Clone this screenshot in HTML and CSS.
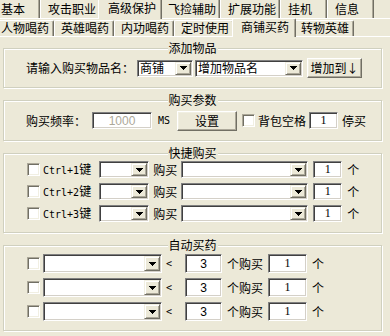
FILE: index.html
```html
<!DOCTYPE html>
<html lang="zh-CN">
<head>
  <meta charset="UTF-8" />
  <title>商铺买药</title>
  <link rel="stylesheet" href="styles.css">
</head>
<body>

<!-- 外层标签 -->
<div class="tabs tabs-outer">
  <span class="tab first">基本</span>
  <span class="tab">攻击职业</span>
  <span class="tab active">高级保护</span>
  <span class="tab">飞捡辅助</span>
  <span class="tab">扩展功能</span>
  <span class="tab">挂机</span>
  <span class="tab">信息</span>
</div>

<!-- 内层标签 -->
<div class="tabs tabs-inner">
  <span class="tab first">人物喝药</span>
  <span class="tab">英雄喝药</span>
  <span class="tab">内功喝药</span>
  <span class="tab">定时使用</span>
  <span class="tab active">商铺买药</span>
  <span class="tab">转物英雄</span>
</div>

<div class="panel">

  <!-- 添加物品 -->
  <div class="group group-add">
    <span class="group-title">添加物品</span>
    <span class="label">请输入购买物品名：</span>
    <div class="combo combo-shop"><span class="combo-text">商铺</span><span class="combo-btn"></span></div>
    <div class="combo combo-item"><span class="combo-text">增加物品名</span><span class="combo-btn"></span></div>
    <button class="btn btn-add">增加到↓</button>
  </div>

  <!-- 购买参数 -->
  <div class="group group-param">
    <span class="group-title">购买参数</span>
    <span class="label">购买频率：</span>
    <input class="field field-rate" value="1000" disabled>
    <span class="mono unit">MS</span>
    <button class="btn btn-set">设置</button>
    <input type="checkbox" class="check check-bag">
    <span class="label-bag">背包空格</span>
    <input class="field field-bag" value="1">
    <span class="label-stop">停买</span>
  </div>

  <!-- 快捷购买 -->
  <div class="group group-quick">
    <span class="group-title">快捷购买</span>
    <div class="row">
      <input type="checkbox" class="check">
      <span class="hotkey"><span class="mono">Ctrl+1</span>键</span>
      <div class="combo combo-key"><span class="combo-text"></span><span class="combo-btn"></span></div>
      <span class="buy">购买</span>
      <div class="combo combo-goods"><span class="combo-text"></span><span class="combo-btn"></span></div>
      <input class="field field-count" value="1">
      <span class="ge">个</span>
    </div>
    <div class="row">
      <input type="checkbox" class="check">
      <span class="hotkey"><span class="mono">Ctrl+2</span>键</span>
      <div class="combo combo-key"><span class="combo-text"></span><span class="combo-btn"></span></div>
      <span class="buy">购买</span>
      <div class="combo combo-goods"><span class="combo-text"></span><span class="combo-btn"></span></div>
      <input class="field field-count" value="1">
      <span class="ge">个</span>
    </div>
    <div class="row">
      <input type="checkbox" class="check">
      <span class="hotkey"><span class="mono">Ctrl+3</span>键</span>
      <div class="combo combo-key"><span class="combo-text"></span><span class="combo-btn"></span></div>
      <span class="buy">购买</span>
      <div class="combo combo-goods"><span class="combo-text"></span><span class="combo-btn"></span></div>
      <input class="field field-count" value="1">
      <span class="ge">个</span>
    </div>
  </div>

  <!-- 自动买药 -->
  <div class="group group-auto">
    <span class="group-title">自动买药</span>
    <div class="row">
      <input type="checkbox" class="check">
      <div class="combo combo-drug"><span class="combo-text"></span><span class="combo-btn"></span></div>
      <span class="mono lt">&lt;</span>
      <input class="field field-min" value="3">
      <span class="buy-n">个购买</span>
      <input class="field field-buy" value="1">
      <span class="ge">个</span>
    </div>
    <div class="row">
      <input type="checkbox" class="check">
      <div class="combo combo-drug"><span class="combo-text"></span><span class="combo-btn"></span></div>
      <span class="mono lt">&lt;</span>
      <input class="field field-min" value="3">
      <span class="buy-n">个购买</span>
      <input class="field field-buy" value="1">
      <span class="ge">个</span>
    </div>
    <div class="row">
      <input type="checkbox" class="check">
      <div class="combo combo-drug"><span class="combo-text"></span><span class="combo-btn"></span></div>
      <span class="mono lt">&lt;</span>
      <input class="field field-min" value="3">
      <span class="buy-n">个购买</span>
      <input class="field field-buy" value="1">
      <span class="ge">个</span>
    </div>
  </div>

</div>

</body>
</html>
```

FILE: styles.css
```css
* { margin: 0; padding: 0; box-sizing: border-box; }
body {
  width: 390px;
  height: 336px;
  overflow: hidden;
  background: #ECE9D8;
  color: #000;
  font: 12px/1 "Noto Sans CJK SC", sans-serif;
}

.mono {
  font-family: "DejaVu Sans Mono", monospace;
  font-size: 10px;
}

/* 标签 */
.tabs {
  display: flex;
  white-space: nowrap;
}

.tab {
  border-left: 1px solid #fff;
  border-right: 1px solid #716F64;
  box-shadow: inset -1px 0 #ACA899;
  background: #ECE9D8;
}

.tabs-outer { height: 18px; }

.tabs-outer .tab {
  height: 18px;
  line-height: 17px;
  min-width: 47px;
  padding: 0 3px 0 7px;
}

.tabs-outer .tab.first { margin-left: -7px; }

.tabs-outer .tab.active {
  position: relative;
  z-index: 1;
  height: 19px;
  line-height: 16px;
  margin: 0 -2px -1px;
  padding: 0 5px 0 9px;
}

.tabs-inner {
  height: 18px;
  border-top: 1px solid #fff;
  align-items: flex-end;
}

.tabs-inner .tab {
  height: 16px;
  line-height: 14px;
  padding: 0 4px 0 6px;
  border-top: 1px solid #fff;
  border-radius: 2px 2px 0 0;
}

.tabs-inner .tab.first { margin-left: -6px; }

.tabs-inner .tab.active {
  position: relative;
  z-index: 1;
  height: 19px;
  line-height: 15px;
  margin: 0 -2px -1px;
  padding: 0 6px 0 8px;
}

/* 面板 */
.panel {
  border-top: 1px solid #fff;
  padding: 11px 0 0 3px;
}

.group {
  position: relative;
  width: 379px;
  border: 1px solid #D0D0BF;
  box-shadow: inset 1px 1px #fff, 1px 1px #fff;
  display: flex;
  align-items: center;
}

.group + .group { margin-top: 12px; }

.group-title {
  position: absolute;
  top: -8px;
  left: 50%;
  transform: translateX(-50%);
  padding: 0 1px;
  line-height: 14px;
  background: #ECE9D8;
  white-space: nowrap;
}

/* 控件 */
.combo {
  display: flex;
  height: 17px;
  padding: 1px;
  background: #fff;
  border: 1px solid;
  border-color: #808080 #fff #fff #808080;
  box-shadow: inset 1px 1px #404040, inset -1px -1px #D4D0C8;
}

.combo-text {
  flex: 1;
  padding-left: 1px;
  display: flex;
  align-items: center;
  white-space: nowrap;
}

.combo-btn {
  width: 16px;
  display: flex;
  align-items: center;
  justify-content: center;
  background: #ECE9D8;
  border: 1px solid;
  border-color: #F1EFE2 #716F64 #716F64 #F1EFE2;
  box-shadow: inset 1px 1px #fff, inset -1px -1px #ACA899;
}

.combo-btn::after {
  content: "";
  width: 7px;
  height: 4px;
  background:
    linear-gradient(#000, #000) 0 0 / 7px 1px no-repeat,
    linear-gradient(#000, #000) 1px 1px / 5px 1px no-repeat,
    linear-gradient(#000, #000) 2px 2px / 3px 1px no-repeat,
    linear-gradient(#000, #000) 3px 3px / 1px 1px no-repeat;
}

.field {
  height: 17px;
  background: #fff;
  border: 1px solid;
  border-color: #808080 #fff #fff #808080;
  box-shadow: inset 1px 1px #404040, inset -1px -1px #D4D0C8;
  font: 12px "Liberation Serif", serif;
  color: #000;
  text-align: center;
  outline: none;
}

.field:disabled {
  font-family: "Liberation Sans", sans-serif;
  color: #ACA899;
}

.check {
  appearance: none;
  width: 13px;
  height: 13px;
  flex: none;
  background: #fff;
  border: 1px solid;
  border-color: #ACA899 #fff #fff #ACA899;
  box-shadow: inset 1px 1px #716F64, inset -1px -1px #F1EFE2;
}

.btn {
  height: 20px;
  font: inherit;
  color: #000;
  background: #ECE9D8;
  border: 1px solid;
  border-color: #fff #716F64 #716F64 #fff;
  box-shadow: inset -1px -1px #ACA899, inset 1px 1px #F1EFE2;
}

/* 添加物品 */
.group-add {
  height: 40px;
  padding-left: 22px;
}

.combo-shop { width: 56px; margin-left: 3px; }
.combo-item { width: 108px; margin-left: 2px; }
.btn-add { width: 55px; margin-left: 4px; }

/* 购买参数 */
.group-param {
  height: 41px;
  padding-left: 22px;
}

.field-rate { width: 60px; margin-left: 6px; }
.unit { margin-left: 6px; }
.btn-set { width: 60px; margin-left: 7px; }
.check-bag { margin-left: 5px; }
.label-bag { margin-left: 3px; }
.field-bag { width: 29px; margin-left: 3px; }
.label-stop { margin-left: 4px; }

/* 快捷购买 / 自动买药 */
.group-quick,
.group-auto {
  flex-direction: column;
  align-items: flex-start;
  gap: 5px;
  padding-left: 23px;
}

.group-quick { height: 80px; padding-top: 7px; }
.group-auto { height: 86px; padding-top: 8px; }

.row {
  display: flex;
  align-items: center;
  height: 17px;
}

.group-auto .row { height: 19px; }
.group-auto .combo,
.group-auto .field { height: 19px; }

.hotkey { margin-left: 3px; }
.combo-key { width: 50px; margin-left: 8px; }
.buy { margin-left: 4px; }
.combo-goods { width: 127px; margin-left: 4px; }
.field-count { width: 29px; margin-left: 5px; }
.ge { margin-left: 5px; }

.combo-drug { width: 119px; margin-left: 3px; }
.lt { margin-left: 4px; }
.field-min { width: 37px; margin-left: 13px; font-family: "Liberation Sans", sans-serif; }
.buy-n { margin-left: 5px; }
.field-buy { width: 39px; margin-left: 5px; }
```
